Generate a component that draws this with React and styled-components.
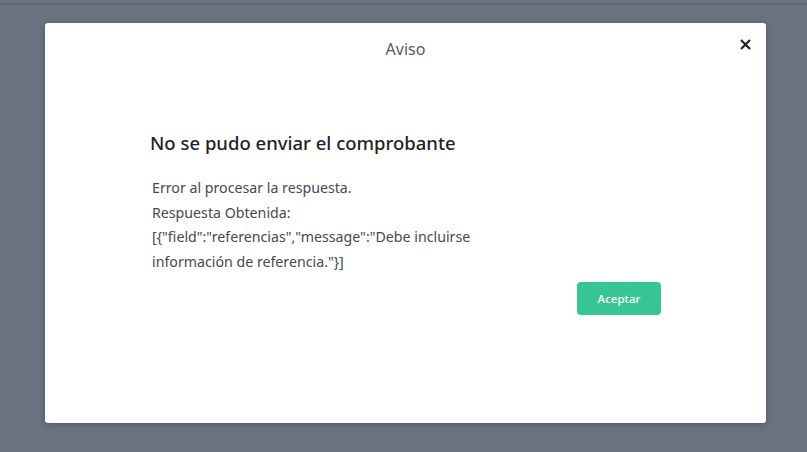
import styled, { createGlobalStyle } from 'styled-components';

const GlobalStyle = createGlobalStyle`
  html, body {
    margin: 0;
    padding: 0;
    height: 100%;
    background: #6a7281;
  }
  body {
    font-family: "Noto Sans", "DejaVu Sans", sans-serif;
  }
`;

const Page = styled.div`
  width: 807px;
  height: 452px;
  overflow: hidden;
  background: #6a7281;
`;

const TopBar = styled.div`
  height: 3px;
  background: #6d7584;
  border-bottom: 2px solid #5e6676;
`;

const Overlay = styled.div`
  padding: 18px 41px 0 45px;
`;

const Modal = styled.div`
  position: relative;
  height: 400px;
  background: #fff;
  border-radius: 3px;
  box-shadow: 0 1px 6px rgba(0, 0, 0, 0.25);
  box-sizing: border-box;
`;

const Header = styled.div`
  display: flex;
  justify-content: center;
  padding-top: 15px;
  height: 36px;
`;

const Title = styled.h5`
  margin: 0;
  font-size: 16px;
  font-weight: 400;
  color: #555a60;
`;

const Close = styled.button`
  position: absolute;
  top: 12px;
  right: 11px;
  border: 0;
  background: none;
  padding: 4px;
  cursor: pointer;
  display: flex;
`;

const Body = styled.div`
  padding: 56px 0 0 105px;
`;

const Heading = styled.h4`
  margin: 0 0 21px;
  font-size: 18.5px;
  font-weight: 500;
  color: #1f2225;
`;

const Message = styled.p`
  margin: 0 0 0 2px;
  width: 340px;
  font-size: 14.2px;
  line-height: 24.7px;
  color: #46494d;
`;

const Actions = styled.div`
  display: flex;
  justify-content: flex-end;
  padding-right: 105px;
  margin-top: 7px;
`;

const Button = styled.button`
  width: 84px;
  height: 33px;
  border: 0;
  border-radius: 4px;
  background: #37c594;
  color: #fff;
  font-family: inherit;
  font-size: 11.5px;
  font-weight: 500;
  cursor: pointer;
`;

const payload = '[{"field":"referencias","message":"Debe incluirse información de referencia."}]';

export default function App() {
  return (
    <Page>
      <GlobalStyle />
      <TopBar />
      <Overlay>
        <Modal>
          <Header>
            <Title>Aviso</Title>
          </Header>
          <Close aria-label="Cerrar">
            <svg width="11" height="11" viewBox="0 0 11 11">
              <path d="M1 1 L10 10 M10 1 L1 10" stroke="#222" strokeWidth="2.2" />
            </svg>
          </Close>
          <Body>
            <Heading>No se pudo enviar el comprobante</Heading>
            <Message>
              Error al procesar la respuesta.
              <br />
              Respuesta Obtenida:
              <br />
              {payload}
            </Message>
          </Body>
          <Actions>
            <Button>Aceptar</Button>
          </Actions>
        </Modal>
      </Overlay>
    </Page>
  );
}
